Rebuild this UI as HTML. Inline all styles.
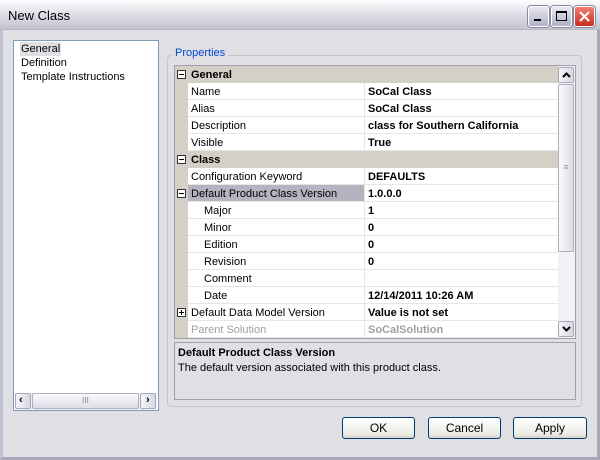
<!DOCTYPE html><html><head><style>
*{margin:0;padding:0;box-sizing:border-box}
body{width:600px;height:460px;overflow:hidden;font-family:"Liberation Sans",sans-serif;font-size:11px;background:#e0dfe3;position:relative}
.a{position:absolute}
.title{left:0;top:0;width:600px;height:30px;background:linear-gradient(#fdfdfe,#d8d8e2 60%,#c4c4d0);border-bottom:1px solid #b8b8c8}
.title span{position:absolute;left:8px;top:8px;font-size:13px;color:#000}
.wb{top:6px;width:21px;height:21px;border:1px solid #fff;border-radius:3px;background:linear-gradient(#e8e8f0,#b0b0c8);box-shadow:0 0 0 1px #8888a0}
.frame{left:0;top:30px;width:600px;height:430px;border:3px solid #c0c0d0;border-top:none;border-right-color:#a8a8b8;border-bottom-color:#a8a8b8}
.list{left:13px;top:40px;width:146px;height:371px;background:#fff;border:1px solid #7f9db9}
.row{position:absolute;left:0;height:17px;width:383px;line-height:18px}
.row .m{position:absolute;left:0;top:0;width:13px;height:17px;background:#d4d0c8}
.row .n{position:absolute;left:13px;top:0;width:177px;height:17px;border-bottom:1px solid #e8e6e0;border-right:1px solid #e8e6e0;padding-left:3px;background:#fff}
.row .v{position:absolute;left:190px;top:0;width:193px;height:17px;border-bottom:1px solid #e8e6e0;padding-left:3px;font-weight:bold;background:#fff}
.row.h{background:#d4d0c8;font-weight:bold}
.row.h span{position:absolute;left:16px}
.box{position:absolute;left:2px;top:4px;width:9px;height:9px;border:1px solid #333;background:#fff}
.box:before{content:"";position:absolute;left:1px;top:3px;width:5px;height:1px;background:#000}
.box.p:after{content:"";position:absolute;left:3px;top:1px;width:1px;height:5px;background:#000}
.sub .n{padding-left:16px}
.btn{top:417px;height:22px;border:1px solid #003c74;border-radius:3px;background:linear-gradient(#fff,#ecebe6 80%,#d6d0c5);text-align:center;line-height:20px;font-size:12px}
.sb{width:16px;height:16px;background:linear-gradient(90deg,#f4f4f8,#d8d8e4);border:1px solid #a8a8b8;border-radius:2px}
</style></head><body>
<div class="a title"><span>New Class</span></div>
<div class="a wb" style="left:528px"><div class="a" style="left:5px;top:12px;width:7px;height:2px;background:#000"></div></div>
<div class="a wb" style="left:551px"><div class="a" style="left:4px;top:4px;width:11px;height:10px;border:1px solid #000;border-top-width:2px"></div></div>
<div class="a wb" style="left:574px;background:linear-gradient(#f08070,#c83020)"><svg class="a" style="left:3px;top:3px" width="13" height="13"><path d="M2 2L11 11M11 2L2 11" stroke="#fff" stroke-width="2"/></svg></div>
<div class="a frame"></div>
<div class="a list">
<div class="a" style="left:6px;top:1px;width:41px;height:14px;background:#e0dfe3"></div>
<div class="a" style="left:7px;top:1px;line-height:14px">General<br>Definition<br>Template Instructions</div>
<div class="a" style="left:1px;top:352px;width:142px;height:17px;background:#f0f0f4">
<div class="a sb" style="left:0;top:0"><span class="a" style="left:3px;top:0;font-weight:bold">‹</span></div>
<div class="a" style="left:17px;top:0;width:107px;height:16px;background:linear-gradient(#fafafc,#dcdce6);border:1px solid #b0b0c0;border-radius:2px;text-align:center;color:#888;font-size:8px;line-height:14px">III</div>
<div class="a sb" style="left:125px;top:0"><span class="a" style="left:5px;top:0;font-weight:bold">›</span></div></div>
</div>
<div class="a" style="left:167px;top:55px;width:415px;height:352px;border:1px solid #c4c4cc;border-radius:4px"></div>
<div class="a" style="left:172px;top:47px;padding:0 3px;background:#e0dfe3;color:#0046d5;font-size:11px">Properties</div>
<div class="a" style="left:174px;top:65px;width:402px;height:274px;border:1px solid #a0a0a8;background:#fff">
<div class="row h" style="top:0"><div class="box"></div><span>General</span></div>
<div class="row" style="top:17px"><div class="m"></div><div class="n">Name</div><div class="v">SoCal Class</div></div>
<div class="row" style="top:34px"><div class="m"></div><div class="n">Alias</div><div class="v">SoCal Class</div></div>
<div class="row" style="top:51px"><div class="m"></div><div class="n">Description</div><div class="v">class for Southern California</div></div>
<div class="row" style="top:68px"><div class="m"></div><div class="n">Visible</div><div class="v">True</div></div>
<div class="row h" style="top:85px"><div class="box"></div><span>Class</span></div>
<div class="row" style="top:102px"><div class="m"></div><div class="n">Configuration Keyword</div><div class="v">DEFAULTS</div></div>
<div class="row" style="top:119px"><div class="m"><div class="box"></div></div><div class="n" style="background:#b4b4c0">Default Product Class Version</div><div class="v">1.0.0.0</div></div>
<div class="row sub" style="top:136px"><div class="m"></div><div class="n">Major</div><div class="v">1</div></div>
<div class="row sub" style="top:153px"><div class="m"></div><div class="n">Minor</div><div class="v">0</div></div>
<div class="row sub" style="top:170px"><div class="m"></div><div class="n">Edition</div><div class="v">0</div></div>
<div class="row sub" style="top:187px"><div class="m"></div><div class="n">Revision</div><div class="v">0</div></div>
<div class="row sub" style="top:204px"><div class="m"></div><div class="n">Comment</div><div class="v"></div></div>
<div class="row sub" style="top:221px"><div class="m"></div><div class="n">Date</div><div class="v">12/14/2011 10:26 AM</div></div>
<div class="row" style="top:238px"><div class="m"><div class="box p"></div></div><div class="n">Default Data Model Version</div><div class="v">Value is not set</div></div>
<div class="row" style="top:255px;color:#a0a0a0"><div class="m"></div><div class="n">Parent Solution</div><div class="v">SoCalSolution</div></div>
<div class="a" style="left:383px;top:0;width:17px;height:272px;background:#f2f2f6">
<div class="a sb" style="left:0;top:1px;width:16px"><svg class="a" style="left:3px;top:4px" width="9" height="6"><path d="M1 5L4.5 1.5L8 5" stroke="#000" stroke-width="2" fill="none"/></svg></div>
<div class="a" style="left:0;top:18px;width:16px;height:168px;background:linear-gradient(90deg,#fafafc,#dcdce6);border:1px solid #b0b0c0;border-radius:2px;color:#999;text-align:center;line-height:164px;font-size:9px">≡</div>
<div class="a sb" style="left:0;top:255px"><svg class="a" style="left:3px;top:4px" width="9" height="6"><path d="M1 1L4.5 4.5L8 1" stroke="#000" stroke-width="2" fill="none"/></svg></div>
</div>
</div>
<div class="a" style="left:174px;top:342px;width:402px;height:58px;border:1px solid #a0a0a8;padding:3px 3px;line-height:15px"><b>Default Product Class Version</b><br>The default version associated with this product class.</div>
<div class="a btn" style="left:342px;width:73px">OK</div>
<div class="a btn" style="left:428px;width:73px">Cancel</div>
<div class="a btn" style="left:513px;width:74px">Apply</div>
</body></html>
